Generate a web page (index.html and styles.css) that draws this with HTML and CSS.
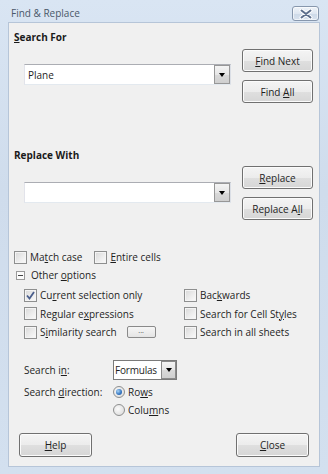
FILE: index.html
```html
<!DOCTYPE html>
<html>
<head>
<meta charset="utf-8">
<link rel="stylesheet" href="styles.css">
</head>
<body>
<div class="window">
  <div class="titlebar">
    <span class="title">Find &amp; Replace</span>
    <span class="close-x">
      <svg width="14" height="10" viewBox="0 0 14 10">
        <path d="M2.5 1.5 L11.5 8.5 M11.5 1.5 L2.5 8.5" stroke="#ffffff" stroke-width="4" stroke-linecap="round"/>
        <path d="M2.5 1.5 L11.5 8.5 M11.5 1.5 L2.5 8.5" stroke="#5d6f8c" stroke-width="2" stroke-linecap="round"/>
      </svg>
    </span>
  </div>
  <div class="client">
    <h2 class="heading heading-first"><u>S</u>earch For</h2>
    <div class="field-row">
      <div class="combo-wrap combo-first">
        <div class="combo"><span class="combo-text">Plane</span><span class="drop"><i class="arrow"></i></span></div>
      </div>
      <div class="btn-col">
        <button class="btn"><u>F</u>ind Next</button>
        <button class="btn">Find <u>A</u>ll</button>
      </div>
    </div>

    <h2 class="heading heading-second">Replace With</h2>
    <div class="field-row">
      <div class="combo-wrap combo-second">
        <div class="combo"><span class="combo-text"></span><span class="drop"><i class="arrow"></i></span></div>
      </div>
      <div class="btn-col">
        <button class="btn"><u>R</u>eplace</button>
        <button class="btn">Replace A<u>l</u>l</button>
      </div>
    </div>

    <div class="opt-row top-checks">
      <label class="chk"><span class="box"></span><span>Ma<u>t</u>ch case</span></label>
      <label class="chk chk-entire"><span class="box"></span><span><u>E</u>ntire cells</span></label>
    </div>
    <div class="opt-row">
      <span class="expander"><span class="minus"></span></span><span>Other <u>o</u>ptions</span>
    </div>
    <div class="opt-grid">
      <label class="chk"><span class="box checked">
        <svg width="11" height="11" viewBox="0 0 11 11"><path d="M2 5.5 L4.5 8.5 L9 2" fill="none" stroke="#4a5e8c" stroke-width="1.8"/></svg>
      </span><span>Cu<u>r</u>rent selection only</span></label>
      <label class="chk"><span class="box"></span><span>Bac<u>k</u>wards</span></label>
      <label class="chk"><span class="box"></span><span>Regular e<u>x</u>pressions</span></label>
      <label class="chk"><span class="box"></span><span>Search for Cell St<u>y</u>les</span></label>
      <label class="chk"><span class="box"></span><span>S<u>i</u>milarity search</span><span class="dots">...</span></label>
      <label class="chk"><span class="box"></span><span>Search in all sheets</span></label>
    </div>

    <div class="search-in">
      <span class="lbl">Search i<u>n</u>:</span>
      <span class="select"><span class="select-text">Formulas</span><span class="drop"><i class="arrow"></i></span></span>
    </div>
    <div class="direction">
      <span class="lbl">Search <u>d</u>irection:</span>
      <label class="radio"><span class="dot on"></span><span>Ro<u>w</u>s</span></label>
      <span class="lbl"></span>
      <label class="radio"><span class="dot"></span><span>Colu<u>m</u>ns</span></label>
    </div>

    <div class="footer">
      <button class="btn btn-foot"><u>H</u>elp</button>
      <button class="btn btn-foot"><u>C</u>lose</button>
    </div>
  </div>
</div>
</body>
</html>
```

FILE: styles.css
```css
* { box-sizing: border-box; }
html, body {
  margin: 0;
  padding: 0;
  width: 328px;
  height: 474px;
  overflow: hidden;
}
body {
  font-family: "Open Sans", "Noto Sans", sans-serif;
  font-size: 10px;
  color: #1e1e1e;
}
u { text-decoration: underline; text-underline-offset: 1px; }

.window {
  width: 328px;
  height: 474px;
  background: linear-gradient(to bottom, #d9e5f3 0%, #cfdcec 40%, #d3e0ef 100%);
  display: flex;
  flex-direction: column;
}
.titlebar {
  height: 22px;
  display: flex;
  align-items: flex-start;
  justify-content: space-between;
  padding: 0 9px 0 11px;
}
.title {
  margin-top: 5px;
  font-size: 10px;
  line-height: 16px;
  color: #4a5869;
}
.close-x {
  margin-top: 6px;
  width: 27px;
  height: 15px;
  border: 1px solid #8797ad;
  border-radius: 3px;
  background: linear-gradient(to bottom, #eef3f9 0%, #dfe7f1 50%, #cdd9e8 51%, #d8e2ee 100%);
  box-shadow: inset 0 0 0 1px rgba(255,255,255,0.6);
  display: flex;
  align-items: center;
  justify-content: center;
}

.client {
  margin: 0 8px;
  height: 445px;
  background: #f0f0f0;
  border: 1px solid #b6c5d8;
  display: flex;
  flex-direction: column;
}

.heading {
  margin: 0 0 0 5px;
  font-size: 10px;
  font-weight: bold;
  line-height: 16px;
  color: #1a1a1a;
}
.heading-first { margin-top: 6px; }
.heading-second { margin-top: 44px; }

.field-row {
  margin-top: 4px;
  display: flex;
  justify-content: space-between;
}
.heading-second + .field-row { margin-top: 3px; }

.combo-wrap { padding-left: 15px; }
.combo-first { padding-top: 15px; }
.combo-second { padding-top: 16px; }

.combo {
  width: 207px;
  height: 21px;
  background: #ffffff;
  border: 1px solid #abadb3;
  border-bottom-color: #e3e9ef;
  border-right-color: #dbdfe6;
  border-left-color: #e2e3ea;
  display: flex;
  align-items: center;
}
.combo-text {
  flex: 1;
  padding-left: 3px;
  line-height: 18px;
}
.drop {
  width: 16px;
  height: 19px;
  border: 1px solid #979797;
  background: linear-gradient(to bottom, #f4f4f4 0%, #e6e6e6 50%, #d9d9d9 51%, #cfcfcf 100%);
  display: flex;
  align-items: center;
  justify-content: center;
  flex: none;
}
.arrow {
  width: 0;
  height: 0;
  border-left: 3.5px solid transparent;
  border-right: 3.5px solid transparent;
  border-top: 4px solid #000;
  margin-top: 1px;
}

.btn-col {
  margin-right: 6px;
  display: flex;
  flex-direction: column;
  gap: 8px;
}
.btn {
  width: 71px;
  height: 23px;
  padding: 0;
  font-family: inherit;
  font-size: 10px;
  color: #1e1e1e;
  border: 1px solid #707070;
  border-radius: 3px;
  background: linear-gradient(to bottom, #f4f4f4 0%, #ececec 50%, #dfdfdf 51%, #d6d6d6 100%);
  box-shadow: inset 0 0 0 1px #fbfbfb;
}

.opt-row {
  margin-left: 5px;
  height: 18px;
  display: flex;
  align-items: center;
  white-space: nowrap;
}
.top-checks { margin-top: 28px; }

.chk {
  display: flex;
  align-items: center;
  height: 18px;
  white-space: nowrap;
}
.chk-entire { margin-left: 12px; }
.box {
  width: 13px;
  height: 13px;
  margin-right: 3px;
  border: 1px solid #8e8f8f;
  background: linear-gradient(135deg, #d8d8d8 0%, #eeeeee 60%, #fbfbfb 100%);
  box-shadow: inset 0 0 0 1px #f4f4f4;
  display: flex;
  align-items: center;
  justify-content: center;
  flex: none;
}
.expander {
  width: 9px;
  height: 9px;
  margin: 0 6px 0 2px;
  border: 1px solid #9a9a9a;
  background: #fbfbfb;
  display: flex;
  align-items: center;
  justify-content: center;
}
.minus {
  width: 5px;
  height: 1px;
  background: #444;
}

.opt-grid {
  margin: 2px 0 0 15px;
  display: grid;
  grid-template-columns: 160px auto;
  grid-auto-rows: 18.5px;
}
.dots {
  margin-left: 10px;
  width: 29px;
  height: 12px;
  border: 1px solid #8a8a8a;
  border-radius: 2px;
  background: linear-gradient(to bottom, #f6f6f6, #e4e4e4);
  font-size: 7px;
  line-height: 8px;
  text-align: center;
  color: #444;
}

.search-in {
  margin: 18px 0 0 15px;
  display: grid;
  grid-template-columns: 89px auto;
  align-items: center;
  height: 20px;
}
.select {
  width: 64px;
  height: 20px;
  border: 1px solid #7a7a7a;
  background: #ffffff;
  display: flex;
  align-items: center;
}
.select-text {
  flex: 1;
  padding-left: 1px;
  line-height: 16px;
  letter-spacing: -0.2px;
  white-space: nowrap;
  overflow: hidden;
}
.select .drop { height: 18px; width: 15px; border-color: #8a8a8a; }

.direction {
  margin: 3px 0 0 15px;
  display: grid;
  grid-template-columns: 89px auto;
  grid-auto-rows: 18px;
  align-items: center;
}
.radio {
  display: flex;
  align-items: center;
}
.dot {
  width: 12px;
  height: 12px;
  margin-right: 3px;
  border-radius: 50%;
  border: 1px solid #8e8f8f;
  background: radial-gradient(circle at 40% 40%, #fbfbfb 0%, #e2e2e2 70%, #d0d0d0 100%);
  display: flex;
  align-items: center;
  justify-content: center;
}
.dot.on::after {
  content: "";
  width: 6px;
  height: 6px;
  border-radius: 50%;
  background: radial-gradient(circle at 35% 35%, #a9d3f5 0%, #3a7bc4 55%, #1d4f94 100%);
}

.footer {
  margin: 14px 10px 0 10px;
  display: flex;
  justify-content: space-between;
}
.btn-foot { width: 73px; height: 24px; }
```
